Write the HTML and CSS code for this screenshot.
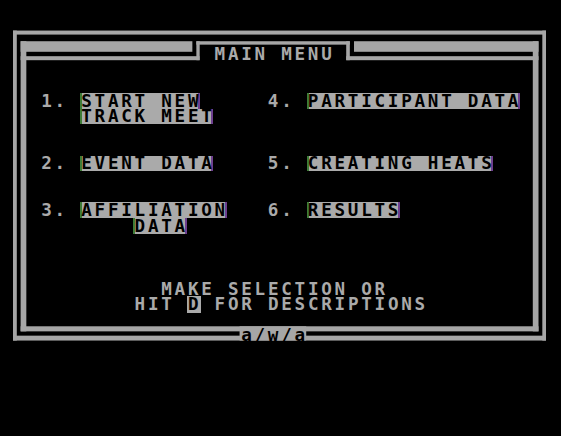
FILE: index.html
```html
<!DOCTYPE html>
<html lang="en">
<head>
<meta charset="utf-8">
<title>Main Menu</title>
<link rel="stylesheet" href="styles.css">
</head>
<body>
<main class="screen">
  <!-- hi-res frame, drawn in 280x192 screen units -->
  <svg class="frame" viewBox="0 0 280 192" preserveAspectRatio="none" aria-hidden="true">
    <g fill="#a6a6a6">
      <!-- outer rim -->
      <rect x="0" y="16.15" width="280" height="2.05"/>
      <rect x="0" y="16.15" width="2" height="158.55"/>
      <rect x="278" y="16.15" width="2" height="158.55"/>
      <rect x="0" y="172.2" width="280" height="2.5"/>
      <!-- heavy bars either side of the title -->
      <rect x="4" y="21.6" width="90.2" height="5.4"/>
      <rect x="179.1" y="21.6" width="96.9" height="5.4"/>
      <!-- inner rim -->
      <rect x="4" y="21.6" width="3" height="148.4"/>
      <rect x="273" y="21.6" width="3" height="148.4"/>
      <rect x="4" y="29.25" width="94" height="2.05"/>
      <rect x="175" y="29.25" width="101" height="2.05"/>
      <rect x="4" y="167.4" width="272" height="2.6"/>
      <!-- title box: cap and posts -->
      <rect x="96.3" y="21.6" width="80.6" height="1.75"/>
      <rect x="96.3" y="21.6" width="1.75" height="9.7"/>
      <rect x="175" y="21.6" width="1.9" height="9.7"/>
      <!-- plate behind the signature -->
      <rect x="119" y="167.4" width="35" height="7.3"/>
    </g>
  </svg>

  <h1 class="title">MAIN MENU</h1>

  <span class="num n1">1.</span>
  <span class="opt o1a inv">START NEW</span>
  <span class="opt o1b inv">TRACK MEET</span>

  <span class="num n4">4.</span>
  <span class="opt o4 inv">PARTICIPANT DATA</span>

  <span class="num n2">2.</span>
  <span class="opt o2 inv">EVENT DATA</span>

  <span class="num n5">5.</span>
  <span class="opt o5 inv">CREATING HEATS</span>

  <span class="num n3">3.</span>
  <span class="opt o3a inv">AFFILIATION</span>
  <span class="opt o3b inv">DATA</span>

  <span class="num n6">6.</span>
  <span class="opt o6 inv">RESULTS</span>

  <p class="prompt p1">MAKE SELECTION OR</p>
  <p class="prompt p2">HIT <span class="key">D</span> FOR DESCRIPTIONS</p>

  <span class="sig">a/w/a</span>
</main>
</body>
</html>
```

FILE: styles.css
```css
html, body {
  margin: 0;
  padding: 0;
  background: #000;
  width: 561px;
  height: 436px;
  overflow: hidden;
}

/* 40 x 24 text screen */
.screen {
  display: grid;
  grid-template-columns: repeat(40, 13.3333px);
  grid-template-rows: repeat(24, 15.65px);
  margin: -0.9px 0 0 13.3333px;
  width: 533.333px;
  font-family: "DejaVu Sans Mono", "Liberation Mono", monospace;
  font-weight: bold;
  font-size: 17.6px;
  line-height: 15.65px;
  letter-spacing: 2.74px;
  color: #aaaaaa;
}

.frame {
  grid-column: 1 / -1;
  grid-row: 1 / -1;
  width: 100%;
  height: 100%;
  display: block;
}

.screen > span,
.screen > p,
.screen > h1 {
  margin: 0;
  padding: 0.9px 0 0 1.3px;
  white-space: nowrap;
  font: inherit;
  line-height: 15.65px;
}

.title { grid-row: 4; grid-column: 16 / span 9; }

.inv {
  background: #aaaaaa;
  color: #000;
  box-shadow: inset 2px 0 0 #3f7d38, inset -2px 0 0 #6e3f8f;
}

/* option numbers */
.num { grid-column: 3 / span 2; }
.n1, .n4 { grid-row: 7; }
.n2, .n5 { grid-row: 11; }
.n3, .n6 { grid-row: 14; }
.n4, .n5, .n6 { grid-column: 20 / span 2; }

/* option labels */
.o1a { grid-row: 7;  grid-column: 6 / span 9; }
.o1b { grid-row: 8;  grid-column: 6 / span 10; }
.o2  { grid-row: 11; grid-column: 6 / span 10; }
.o3a { grid-row: 14; grid-column: 6 / span 11; }
.o3b { grid-row: 15; grid-column: 10 / span 4; }
.o4  { grid-row: 7;  grid-column: 23 / span 16; }
.o5  { grid-row: 11; grid-column: 23 / span 14; }
.o6  { grid-row: 14; grid-column: 23 / span 7; }

.p1 { grid-row: 19; grid-column: 12 / span 17; }
.p2 { grid-row: 20; grid-column: 10 / span 22; }

/* the key letter sits in a full-height inverse cell */
.key {
  display: inline-block;
  height: 15.65px;
  margin: -0.9px 0 0 -1.3px;
  padding: 0.9px 0 0 1.3px;
  vertical-align: top;
  background: #aaaaaa;
  color: #000;
}

.sig {
  grid-row: 22;
  grid-column: 18 / span 5;
  color: #000;
}
```
